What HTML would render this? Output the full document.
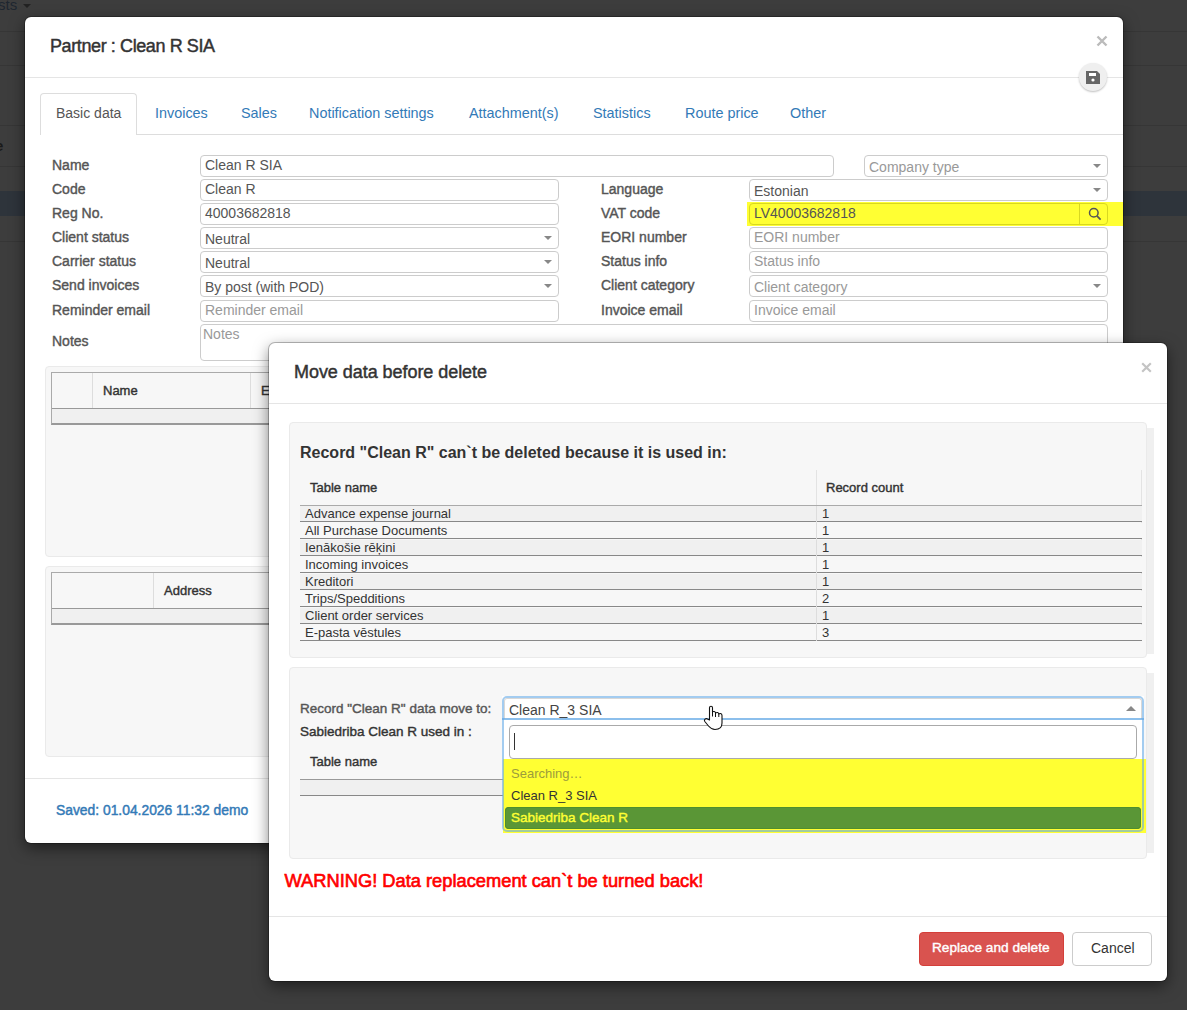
<!DOCTYPE html>
<html><head><meta charset="utf-8">
<style>
*{box-sizing:border-box;margin:0;padding:0}
html,body{width:1187px;height:1010px;overflow:hidden}
body{background:#3d3d3d;font-family:"Liberation Sans",sans-serif;color:#333;position:relative}
.a{position:absolute}
.bgl{position:absolute;left:0;width:1187px;height:1px;background:#363636}
.t{position:absolute;white-space:nowrap;line-height:1}
.m1{left:25px;top:17px;width:1098px;height:826px;background:#fff;border-radius:6px;box-shadow:0 0 0 1px rgba(0,0,0,.25),0 5px 15px rgba(0,0,0,.5)}
.lbl{position:absolute;font-size:14px;color:#555;-webkit-text-stroke:0.4px #555;white-space:nowrap;line-height:1}
.inp{position:absolute;height:22px;border:1px solid #ccc;border-radius:4px;background:#fff}
.inp span{position:absolute;left:4px;top:1.8px;font-size:14px;line-height:1;color:#555;white-space:nowrap}
.inp span.ph{color:#999}
.sel span{top:4.3px}
.arr{position:absolute;right:6px;top:8px;width:0;height:0;border-left:4px solid transparent;border-right:4px solid transparent;border-top:4.5px solid #888}
.panel{position:absolute;background:#f7f7f7;border:1px solid #eaeaea;border-radius:4px}
</style></head><body>
<!-- background page -->
<div class="t" style="left:-2px;top:-3px;font-size:15px;color:#1e2630">sts</div>
<div class="a" style="left:23px;top:4px;border-left:4px solid transparent;border-right:4px solid transparent;border-top:4px solid #222"></div>
<div class="bgl" style="top:31px"></div>
<div class="bgl" style="top:65px"></div>
<div class="bgl" style="top:125px"></div>
<div class="t" style="left:-5px;top:138px;font-size:15px;font-weight:bold;color:#1a1a1a">e</div>
<div class="bgl" style="top:166px"></div>
<div class="a" style="left:0;top:191px;width:1187px;height:25px;background:#2e343b"></div>
<div class="bgl" style="top:241px"></div>

<!-- modal 1 -->
<div class="a m1"></div>
<div class="t" style="left:50px;top:37px;font-size:18px;color:#333;letter-spacing:-0.4px;-webkit-text-stroke:0.45px #333">Partner : Clean R SIA</div>
<div class="a" style="left:1096px;top:33px;width:12px;height:12px">
<svg width="12" height="12" viewBox="0 0 12 12"><path d="M1.5 1.5L10.5 10.5M10.5 1.5L1.5 10.5" stroke="#bbb" stroke-width="2.4"/></svg></div>
<div class="a" style="left:25px;top:77px;width:1098px;height:1px;background:#e5e5e5"></div>
<div class="a" style="left:1079px;top:63px;width:28px;height:28px;border-radius:50%;background:#efefef;box-shadow:0 1px 2px rgba(0,0,0,.25)"></div>
<svg class="a" style="left:1086px;top:71px" width="14" height="13" viewBox="0 0 14 13"><path d="M0 0H11L14 3V13H0Z" fill="#666"/><rect x="3" y="2" width="7" height="3" fill="#fff"/><circle cx="7" cy="9" r="1.6" fill="#fff"/></svg>
<!-- tabs -->
<div class="a" style="left:136px;top:134px;width:987px;height:1px;background:#ddd"></div>
<div class="a" style="left:40px;top:93px;width:97px;height:42px;border:1px solid #ddd;border-bottom:none;border-radius:4px 4px 0 0;background:#fff"></div>
<div class="t" style="left:56px;top:106px;font-size:14px;color:#555">Basic data</div>
<div class="t" style="left:155px;top:106px;font-size:14.4px;color:#337ab7">Invoices</div>
<div class="t" style="left:241px;top:106px;font-size:14.4px;color:#337ab7">Sales</div>
<div class="t" style="left:309px;top:106px;font-size:14.4px;color:#337ab7">Notification settings</div>
<div class="t" style="left:469px;top:106px;font-size:14.4px;color:#337ab7">Attachment(s)</div>
<div class="t" style="left:593px;top:106px;font-size:14.4px;color:#337ab7">Statistics</div>
<div class="t" style="left:685px;top:106px;font-size:14.4px;color:#337ab7">Route price</div>
<div class="t" style="left:790px;top:106px;font-size:14.4px;color:#337ab7">Other</div>
<!-- form left -->
<div class="lbl" style="left:52px;top:158px">Name</div>
<div class="lbl" style="left:52px;top:182px">Code</div>
<div class="lbl" style="left:52px;top:206px">Reg No.</div>
<div class="lbl" style="left:52px;top:230px">Client status</div>
<div class="lbl" style="left:52px;top:254px">Carrier status</div>
<div class="lbl" style="left:52px;top:278px">Send invoices</div>
<div class="lbl" style="left:52px;top:303px">Reminder email</div>
<div class="lbl" style="left:52px;top:334px">Notes</div>
<div class="inp" style="left:200px;top:155px;width:634px"><span>Clean R SIA</span></div>
<div class="inp sel" style="left:864px;top:155px;width:244px"><span class="ph">Company type</span><i class="arr"></i></div>
<div class="inp" style="left:200px;top:179px;width:359px"><span>Clean R</span></div>
<div class="inp" style="left:200px;top:203px;width:359px"><span>40003682818</span></div>
<div class="inp sel" style="left:200px;top:227px;width:359px"><span>Neutral</span><i class="arr"></i></div>
<div class="inp sel" style="left:200px;top:251px;width:359px"><span>Neutral</span><i class="arr"></i></div>
<div class="inp sel" style="left:200px;top:275px;width:359px"><span>By post (with POD)</span><i class="arr"></i></div>
<div class="inp" style="left:200px;top:300px;width:359px"><span class="ph">Reminder email</span></div>
<div class="inp" style="left:200px;top:324px;width:908px;height:37px"><span class="ph" style="top:2px;left:2px">Notes</span></div>
<!-- form right -->
<div class="lbl" style="left:601px;top:182px">Language</div>
<div class="lbl" style="left:601px;top:206px">VAT code</div>
<div class="lbl" style="left:601px;top:230px">EORI number</div>
<div class="lbl" style="left:601px;top:254px">Status info</div>
<div class="lbl" style="left:601px;top:278px">Client category</div>
<div class="lbl" style="left:601px;top:303px">Invoice email</div>
<div class="inp sel" style="left:749px;top:179px;width:359px"><span>Estonian</span><i class="arr"></i></div>
<div class="a" style="left:747px;top:202px;width:376px;height:24px;background:#ffff33"></div>
<div class="inp" style="left:749px;top:203px;width:359px;background:#ffff33;border-color:#d8d820"><span>LV40003682818</span>
<div class="a" style="right:0;top:0;width:28px;height:20px;border-left:1px solid #d8d820"></div>
<svg class="a" style="left:337.5px;top:3px" width="14" height="14" viewBox="0 0 14 14"><circle cx="5.8" cy="5.8" r="4.3" fill="none" stroke="#555" stroke-width="1.5"/><path d="M8.9 8.9L12.6 12.6" stroke="#555" stroke-width="1.7"/></svg></div>
<div class="inp" style="left:749px;top:227px;width:359px"><span class="ph">EORI number</span></div>
<div class="inp" style="left:749px;top:251px;width:359px"><span class="ph">Status info</span></div>
<div class="inp sel" style="left:749px;top:275px;width:359px"><span class="ph">Client category</span><i class="arr"></i></div>
<div class="inp" style="left:749px;top:300px;width:359px"><span class="ph">Invoice email</span></div>
<!-- grid panels -->
<div class="panel" style="left:45px;top:366px;width:1063px;height:191px"></div>
<div class="a" style="left:51px;top:372px;width:1050px;height:53px;border:1px solid #aaa;border-bottom:2px solid #999;background:#f7f7f7"></div>
<div class="a" style="left:52px;top:408px;width:1048px;height:1px;background:#999"></div>
<div class="a" style="left:52px;top:409px;width:1048px;height:14px;background:#f0f0f0"></div>
<div class="a" style="left:92px;top:373px;width:1px;height:35px;background:#ddd"></div>
<div class="a" style="left:250px;top:373px;width:1px;height:35px;background:#ddd"></div>
<div class="lbl" style="left:103px;top:384px;font-size:13px;color:#333;-webkit-text-stroke-color:#333">Name</div>
<div class="lbl" style="left:261px;top:384px;font-size:13px;color:#333;-webkit-text-stroke-color:#333">E</div>
<div class="panel" style="left:45px;top:566px;width:1063px;height:191px"></div>
<div class="a" style="left:51px;top:572px;width:1050px;height:53px;border:1px solid #aaa;border-bottom:2px solid #999;background:#f7f7f7"></div>
<div class="a" style="left:52px;top:608px;width:1048px;height:1px;background:#999"></div>
<div class="a" style="left:52px;top:609px;width:1048px;height:14px;background:#f0f0f0"></div>
<div class="a" style="left:153px;top:573px;width:1px;height:35px;background:#ddd"></div>
<div class="lbl" style="left:164px;top:584px;font-size:13px;color:#333;-webkit-text-stroke-color:#333">Address</div>
<div class="a" style="left:25px;top:778px;width:1098px;height:1px;background:#e5e5e5"></div>
<div class="t" style="left:56px;top:804px;font-size:13.85px;color:#337ab7;-webkit-text-stroke:0.45px #337ab7">Saved: 01.04.2026 11:32 demo</div>


<!-- modal 2 -->
<div class="a" style="left:269px;top:343px;width:898px;height:638px;background:#fff;border-radius:6px;box-shadow:0 0 0 1px rgba(0,0,0,.25),0 5px 15px rgba(0,0,0,.5)"></div>
<div class="t" style="left:294px;top:363px;font-size:18px;color:#333;letter-spacing:-0.05px;-webkit-text-stroke:0.45px #333">Move data before delete</div>
<div class="a" style="left:1141px;top:359px;width:11px;height:11px">
<svg width="11" height="11" viewBox="0 0 11 11"><path d="M1.2 1.2L9.8 9.8M9.8 1.2L1.2 9.8" stroke="#c4c4c4" stroke-width="2.2"/></svg></div>
<div class="a" style="left:269px;top:403px;width:898px;height:1px;background:#e5e5e5"></div>
<!-- panel 1 -->
<div class="a" style="left:1147px;top:428px;width:7px;height:226px;background:#f0f0f0"></div>
<div class="panel" style="left:289px;top:422px;width:858px;height:236px"></div>
<div class="t" style="left:300px;top:444.5px;font-size:16px;font-weight:bold;color:#333">Record "Clean R" can`t be deleted because it is used in:</div>
<div class="a" style="left:816px;top:470px;width:1px;height:171px;background:#e3e3e3"></div>
<div class="a" style="left:1141px;top:470px;width:1px;height:171px;background:#e3e3e3"></div>
<div class="lbl" style="left:310px;top:481px;font-size:13px;color:#333;-webkit-text-stroke-color:#333">Table name</div>
<div class="lbl" style="left:826px;top:481px;font-size:13px;color:#333;-webkit-text-stroke-color:#333">Record count</div>
<div class="a" style="left:300px;top:505px;width:842px;height:1px;background:#aaa"></div>
<div class="a" style="left:300px;top:506px;width:842px;height:16px;background:#f0f0f0;border-bottom:1px solid #888"></div>
<div class="a" style="left:816px;top:506px;width:1px;height:16px;background:#ddd"></div>
<div class="t" style="left:305px;top:507px;font-size:13px;color:#333">Advance expense journal</div>
<div class="t" style="left:822px;top:507px;font-size:13px;color:#333">1</div>
<div class="a" style="left:300px;top:523px;width:842px;height:16px;background:#f7f7f7;border-bottom:1px solid #888"></div>
<div class="a" style="left:816px;top:523px;width:1px;height:16px;background:#ddd"></div>
<div class="t" style="left:305px;top:524px;font-size:13px;color:#333">All Purchase Documents</div>
<div class="t" style="left:822px;top:524px;font-size:13px;color:#333">1</div>
<div class="a" style="left:300px;top:540px;width:842px;height:16px;background:#f0f0f0;border-bottom:1px solid #888"></div>
<div class="a" style="left:816px;top:540px;width:1px;height:16px;background:#ddd"></div>
<div class="t" style="left:305px;top:541px;font-size:13px;color:#333">Ienākošie rēķini</div>
<div class="t" style="left:822px;top:541px;font-size:13px;color:#333">1</div>
<div class="a" style="left:300px;top:557px;width:842px;height:16px;background:#f7f7f7;border-bottom:1px solid #888"></div>
<div class="a" style="left:816px;top:557px;width:1px;height:16px;background:#ddd"></div>
<div class="t" style="left:305px;top:558px;font-size:13px;color:#333">Incoming invoices</div>
<div class="t" style="left:822px;top:558px;font-size:13px;color:#333">1</div>
<div class="a" style="left:300px;top:574px;width:842px;height:16px;background:#f0f0f0;border-bottom:1px solid #888"></div>
<div class="a" style="left:816px;top:574px;width:1px;height:16px;background:#ddd"></div>
<div class="t" style="left:305px;top:575px;font-size:13px;color:#333">Kreditori</div>
<div class="t" style="left:822px;top:575px;font-size:13px;color:#333">1</div>
<div class="a" style="left:300px;top:591px;width:842px;height:16px;background:#f7f7f7;border-bottom:1px solid #888"></div>
<div class="a" style="left:816px;top:591px;width:1px;height:16px;background:#ddd"></div>
<div class="t" style="left:305px;top:592px;font-size:13px;color:#333">Trips/Spedditions</div>
<div class="t" style="left:822px;top:592px;font-size:13px;color:#333">2</div>
<div class="a" style="left:300px;top:608px;width:842px;height:16px;background:#f0f0f0;border-bottom:1px solid #888"></div>
<div class="a" style="left:816px;top:608px;width:1px;height:16px;background:#ddd"></div>
<div class="t" style="left:305px;top:609px;font-size:13px;color:#333">Client order services</div>
<div class="t" style="left:822px;top:609px;font-size:13px;color:#333">1</div>
<div class="a" style="left:300px;top:625px;width:842px;height:16px;background:#f7f7f7;border-bottom:1px solid #888"></div>
<div class="a" style="left:816px;top:625px;width:1px;height:16px;background:#ddd"></div>
<div class="t" style="left:305px;top:626px;font-size:13px;color:#333">E-pasta vēstules</div>
<div class="t" style="left:822px;top:626px;font-size:13px;color:#333">3</div>

<!-- panel 2 -->
<div class="a" style="left:1147px;top:673px;width:7px;height:180px;background:#f0f0f0"></div>
<div class="panel" style="left:289px;top:667px;width:858px;height:192px"></div>
<div class="lbl" style="left:300px;top:702px;font-size:13.5px;color:#555">Record "Clean R" data move to:</div>
<div class="lbl" style="left:300px;top:725px;font-size:13.5px;color:#333;-webkit-text-stroke-color:#333">Sabiedriba Clean R used in :</div>
<div class="lbl" style="left:310px;top:755px;font-size:13px;color:#333;-webkit-text-stroke-color:#333">Table name</div>
<div class="a" style="left:300px;top:779px;width:842px;height:1px;background:#999"></div>
<div class="a" style="left:300px;top:780px;width:842px;height:15px;background:#f0f0f0"></div>
<div class="a" style="left:300px;top:795px;width:842px;height:1px;background:#888"></div>
<!-- select + dropdown -->
<div class="a" style="left:502px;top:696px;width:642px;height:64px;background:#fff"></div>
<div class="a" style="left:503px;top:759px;width:643px;height:74px;background:#ffff33"></div>
<div class="a" style="left:502px;top:696px;width:642px;height:136px;border:2px solid rgba(102,170,230,.6);border-radius:5px"></div>
<div class="a" style="left:504px;top:698px;width:638px;height:21px;border:1px solid #d8d8d8;border-bottom:none;border-radius:3px 3px 0 0"></div>
<div class="a" style="left:502px;top:718px;width:642px;height:2px;background:rgba(102,170,230,.75)"></div>
<div class="t" style="left:509px;top:702.5px;font-size:14px;color:#444">Clean R_3 SIA</div>
<div class="a" style="left:1126px;top:706px;border-left:5px solid transparent;border-right:5px solid transparent;border-bottom:5px solid #888"></div>
<div class="a" style="left:509px;top:725px;width:628px;height:34px;border:1px solid #aaa;border-radius:4px;background:#fff"></div>
<div class="a" style="left:514px;top:733px;width:1px;height:17px;background:#333"></div>
<div class="t" style="left:511px;top:767px;font-size:13px;color:#9c9c3c">Searching…</div>
<div class="t" style="left:511px;top:789px;font-size:13px;color:#333">Clean R_3 SIA</div>
<div class="a" style="left:505px;top:807px;width:636px;height:22px;background:#5a9636;border-radius:4px;box-shadow:inset 0 0 0 1px #4f8e2e"></div>
<div class="t" style="left:511px;top:810.5px;font-size:13.5px;color:#ffff33;-webkit-text-stroke:0.4px #ffff33">Sabiedriba Clean R</div>
<svg class="a" style="left:695px;top:695px" width="40" height="40" viewBox="0 0 40 40"><path d="M14.5 25 L14.5 12.8 Q14.5 11.2 16 11.2 Q17.5 11.2 17.5 12.8 L17.5 17 Q18 16.3 19.2 16.5 Q20.5 16.8 20.5 18 Q21.5 17.3 22.5 17.5 Q23.8 17.8 23.8 19 Q24.5 18.3 25.5 18.5 Q27 18.8 27 20.5 L27 28 Q27 34.5 20 34.5 Q16.5 34.5 13.5 31 L9.8 26.5 Q8.8 25 10.2 24 Q11.5 23 13 24.3 Z" fill="#fff" stroke="#111" stroke-width="1.1" stroke-linejoin="round"/><path d="M17.5 17 L17.5 21.5 M20.5 18 L20.5 22 M23.8 19 L23.8 22" stroke="#111" stroke-width="1"/></svg>
<!-- warning + footer -->
<div class="t" style="left:284.5px;top:872.3px;font-size:18.3px;color:#f00;-webkit-text-stroke:0.65px #f00">WARNING! Data replacement can`t be turned back!</div>
<div class="a" style="left:269px;top:916px;width:898px;height:1px;background:#e5e5e5"></div>
<div class="a" style="left:919px;top:932px;width:145px;height:34px;background:#d9534f;border:1px solid #d43f3a;border-radius:4px"></div>
<div class="t" style="left:932px;top:941px;font-size:13.65px;color:#fff;-webkit-text-stroke:0.4px #fff">Replace and delete</div>
<div class="a" style="left:1072px;top:932px;width:80px;height:34px;background:#fff;border:1px solid #ccc;border-radius:4px"></div>
<div class="t" style="left:1091px;top:941px;font-size:14px;color:#333">Cancel</div>
</body></html>
